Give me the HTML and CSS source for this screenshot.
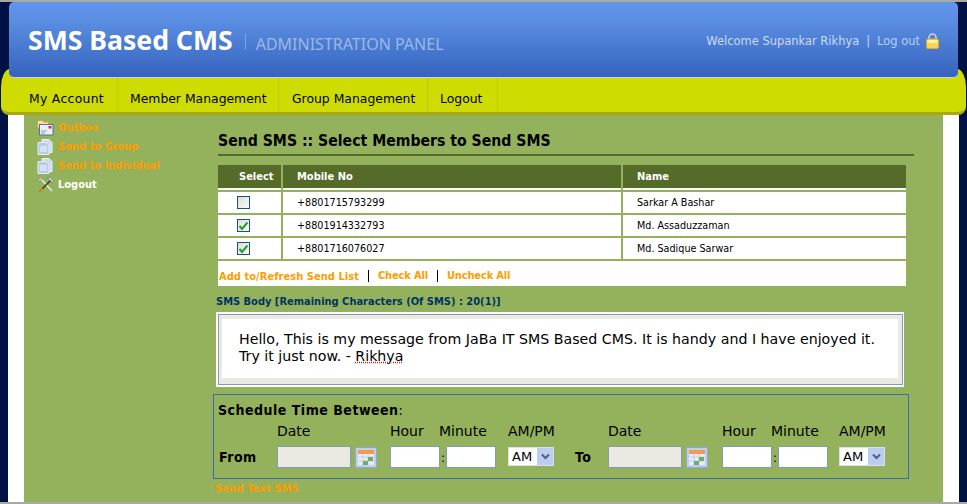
FILE: index.html
```html
<!DOCTYPE html>
<html lang="en">
<head>
<meta charset="utf-8">
<title>SMS Based CMS</title>
<link rel="stylesheet" href="styles.css">
</head>
<body>
<div class="page">
  <div class="topline"></div>
  <header class="header">
    <div class="brand">
      <span class="brand-name">SMS Based CMS</span>
      <span class="brand-sep"></span>
      <span class="brand-sub">ADMINISTRATION PANEL</span>
    </div>
    <div class="userbox">
      <span>Welcome Supankar Rikhya</span>
      <span class="user-sep">|</span>
      <a class="logout-top">Log out</a>
      <svg class="lock" width="13" height="16" viewBox="0 0 13 16"><path d="M3 7V4.500a3.500 3.500 0 0 1 7 0V7" fill="none" stroke="#c9d3de" stroke-width="1.600"/><rect x="0.500" y="6" width="12" height="9.500" rx="1.500" fill="#f7d64f" stroke="#e0a92c"/><rect x="1.500" y="7" width="10" height="3" fill="#fdf0a0"/></svg>
    </div>
  </header>
  <nav class="nav">
    <a class="nav-item nav-first">My Account</a>
    <a class="nav-item nav-member">Member Management</a>
    <a class="nav-item nav-group">Group Management</a>
    <a class="nav-item nav-logout">Logout</a>
  </nav>
  <div class="frame">
    <div class="content">
      <aside class="side">
        <a class="side-item">
          <svg width="17" height="16" viewBox="0 0 17 16"><path d="M0.500 0.500h5l1 1.500h5v6h-11z" fill="#f6dfa0" stroke="#c9a25a"/><rect x="2.500" y="4.500" width="13.500" height="10.500" fill="#e9eef8" stroke="#56709c"/><rect x="11.500" y="6" width="3" height="2.500" fill="#d8352c"/><path d="M4 11h6M4 13h4" stroke="#8d9fbe"/></svg>
          <span>Outbox</span>
        </a>
        <a class="side-item">
          <svg width="17" height="16" viewBox="0 0 17 16"><path d="M5 0.500h7l3 3v10H5z" fill="#cfdaf0" stroke="#eef2fb"/><path d="M1 3.500h8l3 3v9H1z" fill="#b9c9ea" stroke="#e6ecf8"/><path d="M3 8h7M3 10h7M3 12h7" stroke="#f4f7fd"/></svg>
          <span>Send to Group</span>
        </a>
        <a class="side-item">
          <svg width="17" height="16" viewBox="0 0 17 16"><path d="M5 0.500h7l3 3v10H5z" fill="#cfdaf0" stroke="#eef2fb"/><path d="M1 3.500h8l3 3v9H1z" fill="#b9c9ea" stroke="#e6ecf8"/><path d="M3 8h7M3 10h7M3 12h7" stroke="#f4f7fd"/></svg>
          <span>Send to Individual</span>
        </a>
        <a class="side-item side-logout">
          <svg width="17" height="16" viewBox="0 0 17 16"><path d="M3 1l12 13" stroke="#e8edf3" stroke-width="1.400"/><path d="M14 3L2.500 14.500" stroke="#4a3a20" stroke-width="1.600"/><path d="M2.500 14.500l3-3" stroke="#d68a1e" stroke-width="2"/><path d="M10 0.500l5.500 5 1-1.500-3.500-3.500z" fill="#dfe5ee" stroke="#606a78" stroke-width=".6"/><path d="M1 2l3-1.500 1 1.500-2.500 2z" fill="#e8edf3" stroke="#606a78" stroke-width=".6"/></svg>
          <span>Logout</span>
        </a>
      </aside>
      <main class="main">
        <h1 class="title">Send SMS :: Select Members to Send SMS</h1>
        <div class="members">
          <div class="cell head head-select">Select</div>
          <div class="cell head">Mobile No</div>
          <div class="cell head">Name</div>

          <div class="cell cell-check"><span class="check"></span></div>
          <div class="cell">+8801715793299</div>
          <div class="cell cell-name">Sarkar A Bashar</div>

          <div class="cell cell-check"><span class="check"><svg width="11" height="10" viewBox="0 0 11 10"><path d="M1.500 5l2.500 3 5.500-6.500" fill="none" stroke="#21a121" stroke-width="2"/></svg></span></div>
          <div class="cell">+8801914332793</div>
          <div class="cell cell-name">Md. Assaduzzaman</div>

          <div class="cell cell-check"><span class="check"><svg width="11" height="10" viewBox="0 0 11 10"><path d="M1.500 5l2.500 3 5.500-6.500" fill="none" stroke="#21a121" stroke-width="2"/></svg></span></div>
          <div class="cell">+8801716076027</div>
          <div class="cell cell-name">Md. Sadique Sarwar</div>
        </div>
        <div class="actions">
          <a class="action">Add to/Refresh Send List</a>
          <a class="action action-next">Check All</a>
          <a class="action action-next">Uncheck All</a>
        </div>
        <div class="body-label">SMS Body [Remaining Characters (Of SMS) : 20(1)]</div>
        <div class="message-wrap">
          <div class="message">
            <div class="message-text">Hello, This is my message from JaBa IT SMS Based CMS. It is handy and I have enjoyed it. Try it just now. - <span class="misspelt">Rikhya</span></div>
          </div>
        </div>
        <section class="schedule">
          <div class="schedule-title">Schedule Time Between<span class="colon">:</span></div>
          <div class="schedule-grid">
            <span></span>
            <span class="lbl">Date</span><span></span>
            <span class="lbl">Hour</span><span></span><span class="lbl lbl-minute">Minute</span>
            <span class="lbl lbl-ampm">AM/PM</span>
            <span></span>
            <span class="lbl">Date</span><span></span>
            <span class="lbl">Hour</span><span></span><span class="lbl lbl-minute">Minute</span>
            <span class="lbl lbl-ampm-to">AM/PM</span>

            <b class="range">From</b>
            <span class="date"></span>
            <svg class="cal" width="22" height="21" viewBox="0 0 22 21"><rect x="0.500" y="0.500" width="21" height="20" fill="#bfd0ec" stroke="#8fa9d6"/><rect x="3" y="3" width="16" height="15" fill="#e8eef8"/><rect x="3" y="3" width="16" height="4" fill="#f39a4c"/><path d="M3 10h16M3 14h16M8 7v11M13 7v11" stroke="#c3cfe2"/><rect x="8" y="14" width="5" height="4" fill="#6fae64"/><rect x="13" y="10" width="5" height="4" fill="#6fae64"/></svg>
            <span class="time"></span><span class="time-colon">:</span><span class="time"></span>
            <span class="ampm ampm-from"><span>AM</span><span class="ampm-btn"><svg width="9" height="7" viewBox="0 0 9 7"><path d="M1 1.500l3.500 3.500L8 1.500" fill="none" stroke="#4d6185" stroke-width="2"/></svg></span></span>
            <b class="range range-to">To</b>
            <span class="date"></span>
            <svg class="cal" width="22" height="21" viewBox="0 0 22 21"><rect x="0.500" y="0.500" width="21" height="20" fill="#bfd0ec" stroke="#8fa9d6"/><rect x="3" y="3" width="16" height="15" fill="#e8eef8"/><rect x="3" y="3" width="16" height="4" fill="#f39a4c"/><path d="M3 10h16M3 14h16M8 7v11M13 7v11" stroke="#c3cfe2"/><rect x="8" y="14" width="5" height="4" fill="#6fae64"/><rect x="13" y="10" width="5" height="4" fill="#6fae64"/></svg>
            <span class="time"></span><span class="time-colon">:</span><span class="time"></span>
            <span class="ampm ampm-to"><span>AM</span><span class="ampm-btn"><svg width="9" height="7" viewBox="0 0 9 7"><path d="M1 1.500l3.500 3.500L8 1.500" fill="none" stroke="#4d6185" stroke-width="2"/></svg></span></span>
          </div>
        </section>
        <a class="send">Send Text SMS</a>
      </main>
    </div>
  </div>
  <div class="bottomline"></div>
</div>
</body>
</html>
```
FILE: styles.css
```css
* { box-sizing: border-box; }
html, body { margin: 0; padding: 0; }
body { background: #001244; font-family: "DejaVu Sans Condensed", "DejaVu Sans", sans-serif; color: #000; }
.page { width: 967px; height: 504px; overflow: hidden; display: flex; flex-direction: column; background: #001244; }
.topline { height: 2px; flex: none; background: #a9a9a4; }

.header { position: relative; z-index: 2; flex: none; height: 76px; margin: 0 9px; padding: 0 19px 0 19px; display: flex; align-items: center; justify-content: space-between; border-radius: 5px; border-bottom: 1px solid #c4d2ea; background: linear-gradient(#5f95ea 0, #5a8ee2 25%, #3663bd 100%); }
.brand { display: flex; align-items: center; height: 30px; }
.brand-name { font-family: "Noto Sans", sans-serif; font-weight: 700; font-size: 26.600px; color: #fff; white-space: nowrap; }
.brand-sep { width: 1px; height: 16px; margin: 4px 10px 0 12px; background: #7fa4dd; }
.brand-sub { font-family: "Noto Sans", sans-serif; font-size: 16px; color: #9db8e4; margin-top: 8px; white-space: nowrap; }
.userbox { display: flex; align-items: center; font-size: 12.750px; color: #c9daf5; margin-top: 2px; white-space: nowrap; }
.user-sep { margin: 0 7px; }
.logout-top { color: #b6d0f6; margin-right: 6px; }

.nav { position: relative; z-index: 1; flex: none; height: 46px; margin: -9px 1px 0; padding: 9px 0 0 15px; display: flex; background: #cfdc02; border-radius: 9px 9px 8px 8px / 18px 18px 8px 8px; border-bottom: 3px solid #a9a80e; }
.nav-item { display: flex; align-items: center; padding: 6px 0 0 12px; height: 34px; font-family: "DejaVu Sans", sans-serif; font-size: 12.400px; border-right: 1px solid #bfcb0a; white-space: nowrap; }
.nav-first { width: 102px; padding-left: 13px; letter-spacing: .3px; }
.nav-member { width: 161px; }
.nav-group { width: 149px; padding-left: 13px; }
.nav-logout { width: 70px; }

.frame { flex: 1; margin: 0 8px; padding: 0 16px; background: #fff; min-height: 0; }
.content { height: 100%; background: #93b25b; display: flex; }
.side { width: 194px; flex: none; padding: 3px 0 0 13px; }
.side-item { display: flex; align-items: center; gap: 4px; height: 19px; font-size: 11px; font-weight: 700; color: #ff9c00; white-space: nowrap; }
.side-logout { color: #fff; }
.main { flex: none; width: 696px; }

.title { margin: 0; height: 41px; padding: 15px 0 0 0; font-size: 15.670px; font-weight: 700; line-height: 22px; border-bottom: 2px solid #556b29; white-space: nowrap; }
.members { width: 688px; margin-top: 9px; display: grid; grid-template-columns: 63px 338px 283px; column-gap: 2px; row-gap: 2px; grid-template-rows: 25px 21px 21px 21px; }
.cell { background: #fff; display: flex; align-items: center; padding-left: 14px; font-size: 10.700px; }
.cell-name { padding-left: 14px; }
.head { background: #556b29; color: #fff; font-weight: 700; border-bottom: 2px solid #fff; font-size: 11px; }
.head-select { padding-left: 21px; }
.cell-check { padding-left: 19px; }
.check { width: 13px; height: 13px; display: flex; align-items: center; justify-content: center; border: 1px solid #1c5180; background: linear-gradient(135deg, #dcdcd7, #fbfbf9); }
.actions { width: 688px; height: 25px; margin-top: 2px; padding: 5px 0 0 1px; background: #fff; display: flex; align-items: center; }
.action { font-size: 11px; font-weight: 700; color: #ff9c00; white-space: nowrap; letter-spacing: .05px; }
.action-next { border-left: 1px solid #000; margin-left: 9px; padding-left: 9px; line-height: 12px; letter-spacing: -.15px; }
.body-label { margin: 9px 0 0 -2px; height: 17px; line-height: 14px; font-size: 11px; font-weight: 700; color: #003366; white-space: nowrap; }
.message-wrap { width: 688px; height: 75px; margin-left: -2px; border: solid #fff; border-width: 2px 1px 2px 2px; }
.message { height: 71px; padding: 4px 4px 6px 3px; border: 1px solid #7f9db9; background: #ece9e2; }
.message-text { height: 59px; padding: 12px 8px 0 17px; background: #fff; font-family: "DejaVu Sans", sans-serif; font-size: 14.200px; line-height: 17px; }
.misspelt { text-decoration: underline dotted #e11; }

.schedule { width: 696px; height: 85px; margin: 7px 0 0 -5px; border: 1px solid #3a6ab8; padding: 6px 4px 0 4px; }
.schedule-title { font-size: 14px; font-weight: 700; height: 22px; line-height: 18px; letter-spacing: .5px; white-space: nowrap; }
.colon { font-weight: 400; }
.schedule-grid { display: grid; grid-template-columns: 59px 74px 39px 50px 6px 50px 79px 33px 74px 40px 50px 6px 50px 60px; grid-template-rows: 22px 24px; align-items: center; }
.lbl { align-self: start; font-family: "DejaVu Sans", sans-serif; font-size: 14px; line-height: 16px; white-space: nowrap; }
.lbl-minute { margin-left: -7px; }
.lbl-ampm { margin-left: 12px; }
.lbl-ampm-to { margin-left: 11px; }
.range { font-size: 14px; letter-spacing: .5px; padding-left: 1px; }
.range-to { padding-left: 0; }
.date { height: 22px; width: 74px; background: #ece9e2; border: 1px solid #7f9db9; }
.cal { margin-left: 4px; }
.time { height: 22px; width: 50px; background: #fff; border: 1px solid #7f9db9; }
.time-colon { font-size: 13px; text-align: center; }
.ampm { width: 46px; height: 19px; margin-top: -2px; display: flex; align-items: center; justify-content: space-between; background: #fff; border: 1px solid #d5e0f2; padding-left: 3px; font-family: "DejaVu Sans", sans-serif; font-size: 13px; }
.ampm-from { margin-left: 12px; }
.ampm-to { margin-left: 11px; }
.ampm-btn { width: 16px; height: 17px; display: flex; align-items: center; justify-content: center; background: #bdcdf0; }
.send { display: block; margin: 3px 0 0 -3px; font-size: 11.200px; font-weight: 700; color: #ff9c00; line-height: 14px; }
.bottomline { height: 2px; flex: none; background: #a9a9a4; }
```
